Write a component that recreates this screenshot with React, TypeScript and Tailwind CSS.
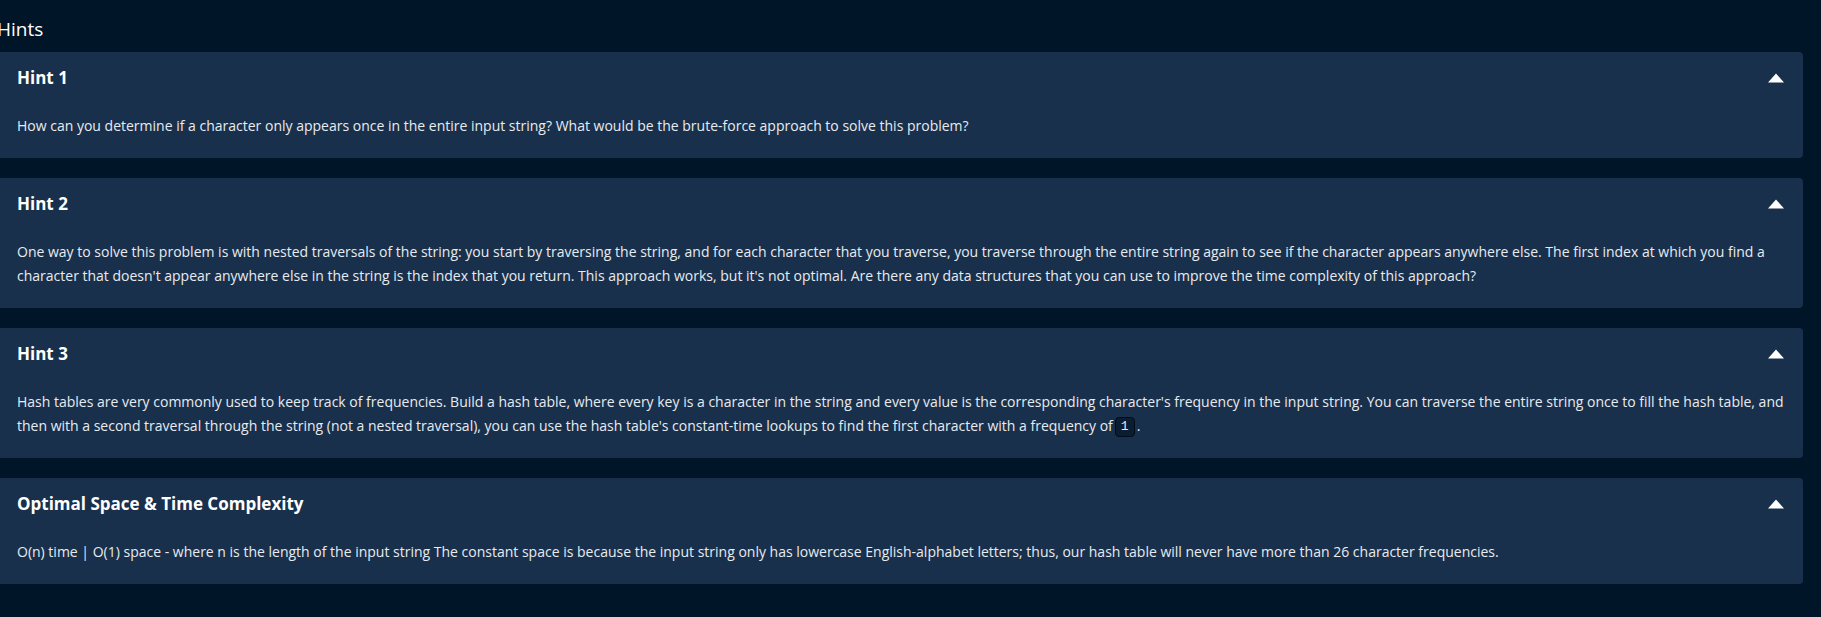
import React from "react";

const hints = [
  {
    title: "Hint 1",
    body: (
      <>
        How can you determine if a character only appears once in the entire input string? What would be the brute-force
        approach to solve this problem?
      </>
    ),
  },
  {
    title: "Hint 2",
    body: (
      <>
        One way to solve this problem is with nested traversals of the string: you start by traversing the string, and for
        each character that you traverse, you traverse through the entire string again to see if the character appears
        anywhere else. The first index at which you find a character that doesn't appear anywhere else in the string is
        the index that you return. This approach works, but it's not optimal. Are there any data structures that you can
        use to improve the time complexity of this approach?
      </>
    ),
  },
  {
    title: "Hint 3",
    body: (
      <>
        Hash tables are very commonly used to keep track of frequencies. Build a hash table, where every key is a
        character in the string and every value is the corresponding character's frequency in the input string. You can
        traverse the entire string once to fill the hash table, and then with a second traversal through the string (not
        a nested traversal), you can use the hash table's constant-time lookups to find the first character with a
        frequency of
        <code className="mx-[2px] inline-block rounded-[4px] border border-[#020c18] bg-[#0a1d32] px-[5px] py-[2px] align-middle font-['Liberation_Mono',monospace] text-[13px] leading-[14px] text-[#e6e9ee]">
          1
        </code>
        .
      </>
    ),
  },
  {
    title: "Optimal Space & Time Complexity",
    body: (
      <>
        O(n) time | O(1) space - where n is the length of the input string The constant space is because the input string
        only has lowercase English-alphabet letters; thus, our hash table will never have more than 26 character
        frequencies.
      </>
    ),
  },
];

const CaretUp = () => (
  <svg width="16" height="10" viewBox="0 0 16 10" className="shrink-0">
    <polygon points="8,0.5 16,9.5 0,9.5" fill="#ffffff" />
  </svg>
);

export default function App() {
  return (
    <div className="min-h-[617px] w-full bg-[#011528] pr-[18px] font-['Open_Sans',sans-serif] text-white">
      <h2 className="-ml-[3px] pt-[16px] pb-[10px] text-[19px] leading-[26px]">Hints</h2>

      <div className="flex flex-col gap-5">
        {hints.map((hint) => (
          <div key={hint.title} className="rounded-r-[4px] bg-[#18304b] pt-[14px] pb-5 pl-[17px] pr-[19px]">
            <div className="flex h-6 items-center justify-between">
              <h3 className="text-[17px] font-bold leading-6">{hint.title}</h3>
              <CaretUp />
            </div>
            <p className="mt-6 text-[14px] leading-6 text-[#e8ebf0]">{hint.body}</p>
          </div>
        ))}
      </div>
    </div>
  );
}
